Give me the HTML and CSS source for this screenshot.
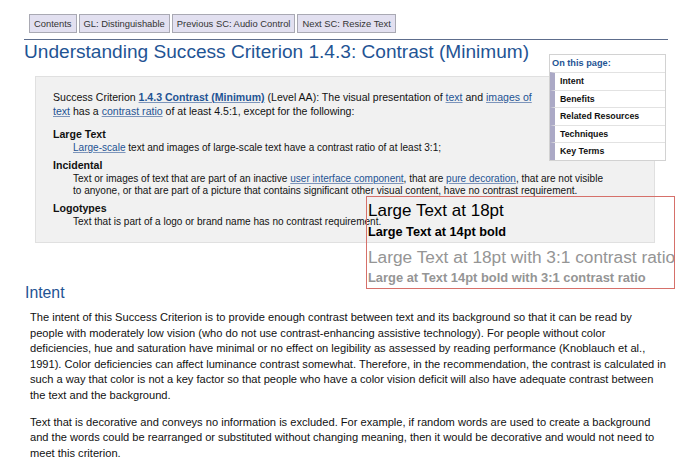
FILE: index.html
```html
<!DOCTYPE html>
<html lang="en">
<head>
<meta charset="utf-8">
<title>Understanding Success Criterion 1.4.3: Contrast (Minimum)</title>
<link rel="stylesheet" href="styles.css">
</head>
<body>
<div class="page">
  <nav class="nav">
    <a class="navbtn" href="#">Contents</a>
    <a class="navbtn" href="#">GL: Distinguishable</a>
    <a class="navbtn" href="#">Previous SC: Audio Control</a>
    <a class="navbtn" href="#">Next SC: Resize Text</a>
  </nav>
  <div class="rule"></div>

  <aside class="toc">
    <div class="toc-head">On this page:</div>
    <ul class="toc-list">
      <li class="toc-item">Intent</li>
      <li class="toc-item">Benefits</li>
      <li class="toc-item">Related Resources</li>
      <li class="toc-item">Techniques</li>
      <li class="toc-item">Key Terms</li>
    </ul>
  </aside>

  <h1 class="title">Understanding Success Criterion 1.4.3: Contrast (Minimum)</h1>

  <section class="sc">
    <p class="sc-lead">Success Criterion <a class="link strong" href="#">1.4.3 Contrast (Minimum)</a> (Level AA): The visual presentation of <a class="link" href="#">text</a> and <a class="link" href="#">images of text</a> has a <a class="link" href="#">contrast ratio</a> of at least 4.5:1, except for the following:</p>
    <dl class="sc-list">
      <dt class="sc-term">Large Text</dt>
      <dd class="sc-def"><a class="link" href="#">Large-scale</a> text and images of large-scale text have a contrast ratio of at least 3:1;</dd>
      <dt class="sc-term">Incidental</dt>
      <dd class="sc-def">Text or images of text that are part of an inactive <a class="link" href="#">user interface component</a>, that are <a class="link" href="#">pure decoration</a>, that are not visible to anyone, or that are part of a picture that contains significant other visual content, have no contrast requirement.</dd>
      <dt class="sc-term">Logotypes</dt>
      <dd class="sc-def">Text that is part of a logo or brand name has no contrast requirement.</dd>
    </dl>
  </section>

  <div class="sample">
    <div class="s1">Large Text at 18pt</div>
    <div class="s2">Large Text at 14pt bold</div>
    <div class="s3">Large Text at 18pt with 3:1 contrast ratio</div>
    <div class="s4">Large at Text 14pt bold with 3:1 contrast ratio</div>
  </div>

  <h2 class="section-title">Intent</h2>
  <div class="body">
    <p class="para">The intent of this Success Criterion is to provide enough contrast between text and its background so that it can be read by people with moderately low vision (who do not use contrast-enhancing assistive technology). For people without color deficiencies, hue and saturation have minimal or no effect on legibility as assessed by reading performance (Knoblauch et al., 1991). Color deficiencies can affect luminance contrast somewhat. Therefore, in the recommendation, the contrast is calculated in such a way that color is not a key factor so that people who have a color vision deficit will also have adequate contrast between the text and the background.</p>
    <p class="para">Text that is decorative and conveys no information is excluded. For example, if random words are used to create a background and the words could be rearranged or substituted without changing meaning, then it would be decorative and would not need to meet this criterion.</p>
  </div>
</div>
</body>
</html>
```
FILE: styles.css
```css
html, body {
  margin: 0;
  padding: 0;
  background: #ffffff;
}
body {
  font-family: "Liberation Sans", Arial, Helvetica, sans-serif;
  color: #111;
  width: 680px;
  height: 465px;
  overflow: hidden;
}
.page {
  position: relative;
  padding: 14px 12px 0 24px;
}
.nav {
  display: flex;
  gap: 2px;
  margin-left: 5px;
}
.navbtn {
  display: flex;
  align-items: center;
  height: 17px;
  padding: 0 4px;
  background: #e2e0f0;
  border: 1px solid #a9a9b3;
  color: #333;
  font-size: 9.4px;
  text-decoration: none;
  white-space: nowrap;
}
.rule {
  margin-top: 6px;
  width: 644px;
  border-top: 1px solid #5d6d8c;
}
.title {
  margin: 1px 0 0 0;
  font-size: 19.1px;
  line-height: 22px;
  font-weight: normal;
  color: #1f5494;
}
.toc {
  float: right;
  margin: 14px 2px 4px 4px;
  width: 115px;
  border: 1px solid #d2d2d2;
  background: #fff;
  position: relative;
  z-index: 2;
}
.toc-head {
  height: 17px;
  line-height: 17px;
  padding-left: 2px;
  font-size: 9.2px;
  font-weight: bold;
  color: #1f5494;
}
.toc-list {
  list-style: none;
  margin: 0;
  padding: 0;
}
.toc-item {
  height: 16.5px;
  line-height: 16.5px;
  border-top: 1px solid #e2e2e2;
  border-left: 5px solid #aba9c6;
  padding-left: 5px;
  font-size: 8.8px;
  font-weight: bold;
  color: #111;
}
.sc {
  margin: 13px 0 0 11px;
  width: 555px;
  padding: 13px 46px 14px 17px;
  background: #f1f1f1;
  border: 1px solid #e0e0e0;
}
.sc-lead {
  margin: 0;
  font-size: 10.55px;
  line-height: 14px;
}
.link {
  color: #1f5494;
  text-decoration: underline;
  text-decoration-color: #7d95bb;
}
.strong {
  font-weight: bold;
}
.sc-list {
  margin: 9px 0 0 0;
}
.sc-term {
  font-size: 10.6px;
  line-height: 15px;
  font-weight: bold;
  margin-top: 3px;
}
.sc-term:first-child {
  margin-top: 0;
}
.sc-def {
  margin: 0 0 0 20px;
  font-size: 10.05px;
  line-height: 12.5px;
}
.sample {
  position: absolute;
  left: 366px;
  top: 196px;
  width: 306px;
  height: 88px;
  border: 1.5px solid #d6706a;
  padding: 2.5px 0 0 1px;
  box-sizing: content-box;
  overflow: hidden;
  white-space: nowrap;
  z-index: 1;
}
.s1 {
  font-size: 17px;
  line-height: 22px;
  color: #000;
}
.s2 {
  font-size: 12.7px;
  line-height: 20px;
  font-weight: bold;
  color: #000;
}
.s3 {
  margin-top: 2px;
  font-size: 17.3px;
  line-height: 26px;
  color: #959595;
}
.s4 {
  font-size: 12.9px;
  line-height: 15px;
  font-weight: bold;
  color: #959595;
}
.section-title {
  margin: 40px 0 0 1px;
  font-size: 15.8px;
  line-height: 20px;
  font-weight: normal;
  color: #1f5494;
}
.body {
  margin: 7px 0 0 6px;
  width: 638px;
}
.para {
  margin: 0 0 11.5px 0;
  font-size: 11.1px;
  line-height: 15.5px;
  color: #111;
}
```
